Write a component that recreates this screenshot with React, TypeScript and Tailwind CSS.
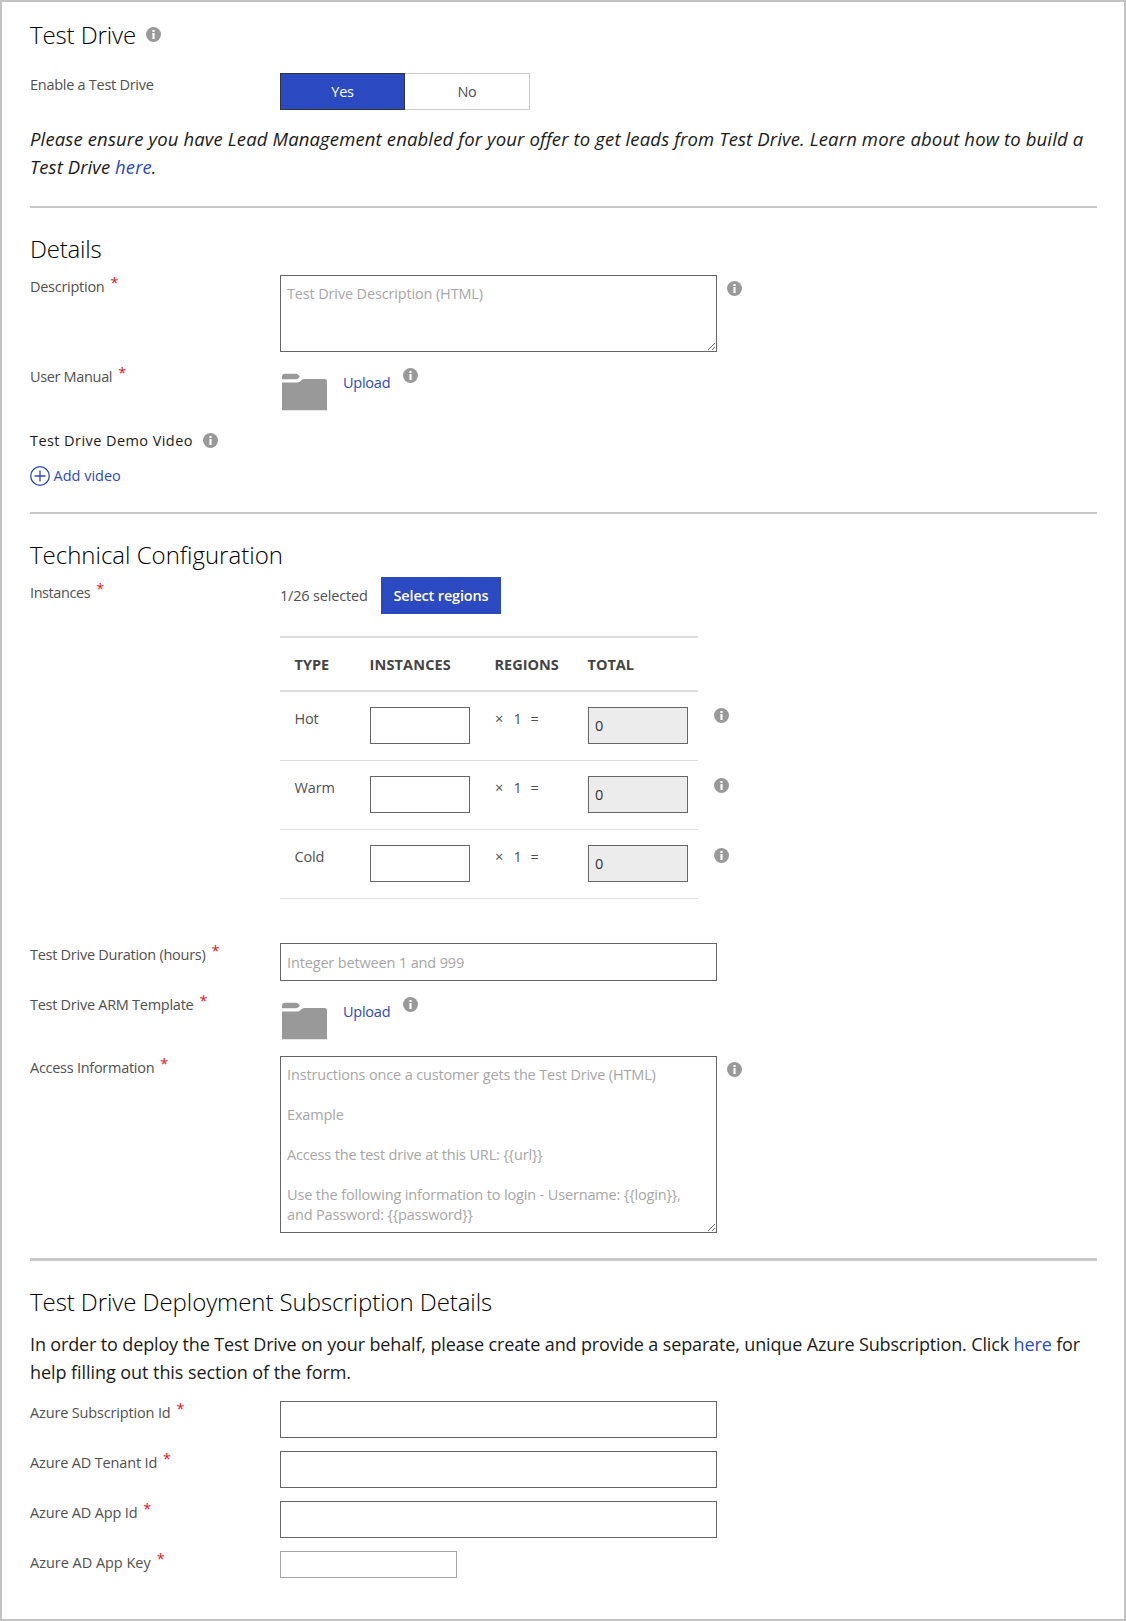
import type { ReactNode } from "react";

function Info({ className = "" }: { className?: string }) {
  return (
    <svg className={`block h-[15px] w-[15px] shrink-0 ${className}`} viewBox="0 0 15 15" aria-hidden="true">
      <circle cx="7.5" cy="7.5" r="7.5" fill="#999" />
      <rect x="6.4" y="3" width="2.2" height="2" fill="#fff" />
      <rect x="6.4" y="6" width="2.2" height="6" fill="#fff" />
    </svg>
  );
}

function Folder() {
  return (
    <svg className="mt-[8px] block h-[38px] w-[45px] shrink-0" viewBox="0 0 45 38" fill="#999" aria-hidden="true">
      <path d="M0 6.3V3.7Q0 0.7 3 0.7H13.5Q15.3 0.7 16.6 2L18 3.5L16.6 5Q15.3 6.3 13.5 6.3Z" />
      <path d="M0 9.6H14.5Q17 9.6 18.6 8.1Q20.3 6.1 22.5 6.1H42.5Q45 6.1 45 8.6V37.2H0Z" />
    </svg>
  );
}

function Row({
  label,
  required = true,
  tracking = "tracking-[-0.27px]",
  labelPad = "pt-[2px]",
  className = "",
  children,
}: {
  label: string;
  required?: boolean;
  tracking?: string;
  labelPad?: string;
  className?: string;
  children: ReactNode;
}) {
  return (
    <div className={`flex items-start ${className}`}>
      <div className={`flex w-[250px] shrink-0 ${labelPad}`}>
        <span className={tracking}>{label}</span>
        {required && <span className="relative -top-[4px] ml-[6px] text-[14.5px] text-[#e81123]">*</span>}
      </div>
      {children}
    </div>
  );
}

function Heading({ className = "", children }: { className?: string; children: ReactNode }) {
  return <h2 className={`text-[24px] leading-[32px] font-light text-black ${className}`}>{children}</h2>;
}

function Upload() {
  return (
    <div className="flex items-start pl-[2px]">
      <Folder />
      <a className="mt-[8px] ml-[16px] w-[48px] tracking-[-0.25px] text-[#2b49c1]">Upload</a>
      <Info className="mt-[3px] ml-[12px]" />
    </div>
  );
}

const field =
  "block w-[437px] border border-[#666] bg-white px-[6px] text-[14.5px] leading-[20px] tracking-[-0.15px] text-[#212121] outline-none placeholder:text-[#a6a6a6] placeholder:opacity-100";

const accessHint = [
  "Instructions once a customer gets the Test Drive (HTML)",
  "",
  "Example",
  "",
  "Access the test drive at this URL: {{url}}",
  "",
  "Use the following information to login - Username: {{login}},",
  "and Password: {{password}}",
].join("\n");

export default function App() {
  return (
    <div className="h-[1621px] w-[1126px] border-2 border-[#c2c2c2] bg-white pt-[17px] pr-[27px] pl-[28px] font-['Open_Sans',sans-serif] text-[14.5px] leading-[20px] text-[#505050]">
      <div className="flex">
        <Heading className="tracking-[-0.11px]">Test Drive</Heading>
        <Info className="mt-[8px] ml-[10px]" />
      </div>

      <Row label="Enable a Test Drive" required={false} className="mt-[22px]">
        <div className="flex h-[37px] tracking-[-0.2px]">
          <button className="w-[125px] border border-[#333] bg-[#2b49c1] text-white">Yes</button>
          <button className="w-[125px] border border-l-0 border-[#ccc] bg-white">No</button>
        </div>
      </Row>

      <p className="mt-[15px] text-[18.5px] leading-[28px] tracking-[0.135px] whitespace-nowrap text-[#1a1a1a] italic">
        Please ensure you have Lead Management enabled for your offer to get leads from Test Drive. Learn more about how to build a
        <br />
        <span className="tracking-[0.08px]">
          Test Drive <a className="text-[#2b49c1]">here</a>.
        </span>
      </p>

      <hr className="mt-[25px] border-t-2 border-[#c8c8c8]" />

      <Heading className="mt-[25px] tracking-[-0.2px]">Details</Heading>
      <Row label="Description" className="mt-[10px]">
        <textarea className={`${field} h-[77px] resize pt-[8px]`} placeholder="Test Drive Description (HTML)" />
        <Info className="mt-[6px] ml-[10px]" />
      </Row>
      <Row label="User Manual" tracking="tracking-[-0.34px]" className="mt-[13px] h-[50px]">
        <Upload />
      </Row>

      <div className="mt-[15px] flex text-[#1a1a1a]">
        <span className="relative top-px w-[163px] tracking-[0.43px]">Test Drive Demo Video</span>
        <Info className="mt-[3px] ml-[10px]" />
      </div>
      <a className="mt-[16px] flex h-[20px] text-[#2b49c1]">
        <svg className="block h-[20px] w-[20px]" viewBox="0 0 20 20" fill="none" stroke="#2b49c1" strokeWidth="1.3">
          <circle cx="10" cy="10" r="9.3" />
          <path d="M10 4.5V15.5M4.5 10H15.5" />
        </svg>
        <span className="ml-[3.5px]">Add video</span>
      </a>

      <hr className="mt-[26px] border-t-2 border-[#c8c8c8]" />

      <Heading className="mt-[25px]">Technical Configuration</Heading>
      <Row label="Instances" tracking="tracking-[-0.42px]" labelPad="pt-[6px]" className="mt-[6px]">
        <div>
          <div className="flex items-center">
            <span className="w-[101px] tracking-[-0.18px]">1/26 selected</span>
            <button className="h-[37px] w-[120px] bg-[#2b49c1] font-semibold tracking-[-0.16px] text-white">Select regions</button>
          </div>
          <div className="mt-[22px] flex items-start">
            <div className="w-[418px]">
              <div className="flex h-[56px] items-center border-y-2 border-[#ddd] pt-[2px] pl-[14.5px] font-bold text-[#444]">
                <span className="w-[75px]">TYPE</span>
                <span className="w-[125px] tracking-[0.15px]">INSTANCES</span>
                <span className="w-[93px]">REGIONS</span>
                <span>TOTAL</span>
              </div>
              {["Hot", "Warm", "Cold"].map((type) => (
                <div key={type} className="flex h-[69px] items-start border-b border-[#ddd] pt-[15px] pl-[15px]">
                  <span className="mt-[2px] -ml-[0.5px] w-[75.5px] tracking-[-0.15px]">{type}</span>
                  <input className="h-[37px] w-[100px] border border-[#666] bg-white px-[6px] outline-none" />
                  <span className="mt-[2px] flex w-[118px] pl-[25px]">
                    <span className="w-[18.5px]">×</span>
                    <span className="w-[17px]">1</span>
                    <span>=</span>
                  </span>
                  <input
                    className="h-[37px] w-[100px] border border-[#666] bg-[#ececec] px-[6px] text-[#333] outline-none"
                    value="0"
                    readOnly
                  />
                </div>
              ))}
            </div>
            <div className="flex flex-col gap-[55px] pt-[72px] pl-[16px]">
              <Info />
              <Info />
              <Info />
            </div>
          </div>
        </div>
      </Row>

      <Row label="Test Drive Duration (hours)" className="mt-[44px]">
        <input className={`${field} h-[38px]`} placeholder="Integer between 1 and 999" />
      </Row>
      <Row label="Test Drive ARM Template" labelPad="pt-px" className="mt-[13px] h-[50px]">
        <Upload />
      </Row>
      <Row label="Access Information" className="mt-[12px]">
        <textarea className={`${field} h-[177px] resize pt-[8px]`} placeholder={accessHint} />
        <Info className="mt-[6px] ml-[10px]" />
      </Row>

      <hr className="mt-[25px] border-t-3 border-[#c8c8c8]" />

      <Heading className="mt-[25px] tracking-[-0.07px]">Test Drive Deployment Subscription Details</Heading>
      <p className="mt-[12px] text-[18px] leading-[28px] tracking-[-0.14px] whitespace-nowrap text-[#1a1a1a]">
        In order to deploy the Test Drive on your behalf, please create and provide a separate, unique Azure Subscription. Click{" "}
        <a className="text-[#2b49c1]">here</a> for
        <br />
        <span className="tracking-[-0.06px]">help filling out this section of the form.</span>
      </p>

      <div className="mt-[15px] flex flex-col gap-[13px]">
        {["Azure Subscription Id", "Azure AD Tenant Id", "Azure AD App Id"].map((label) => (
          <Row key={label} label={label} tracking="tracking-[-0.16px]">
            <input className={`${field} h-[37px]`} />
          </Row>
        ))}
        <Row label="Azure AD App Key" tracking="tracking-[-0.03px]">
          <input className="h-[27px] w-[177px] border border-[#a6a6a6] bg-white outline-none" />
        </Row>
      </div>
    </div>
  );
}
